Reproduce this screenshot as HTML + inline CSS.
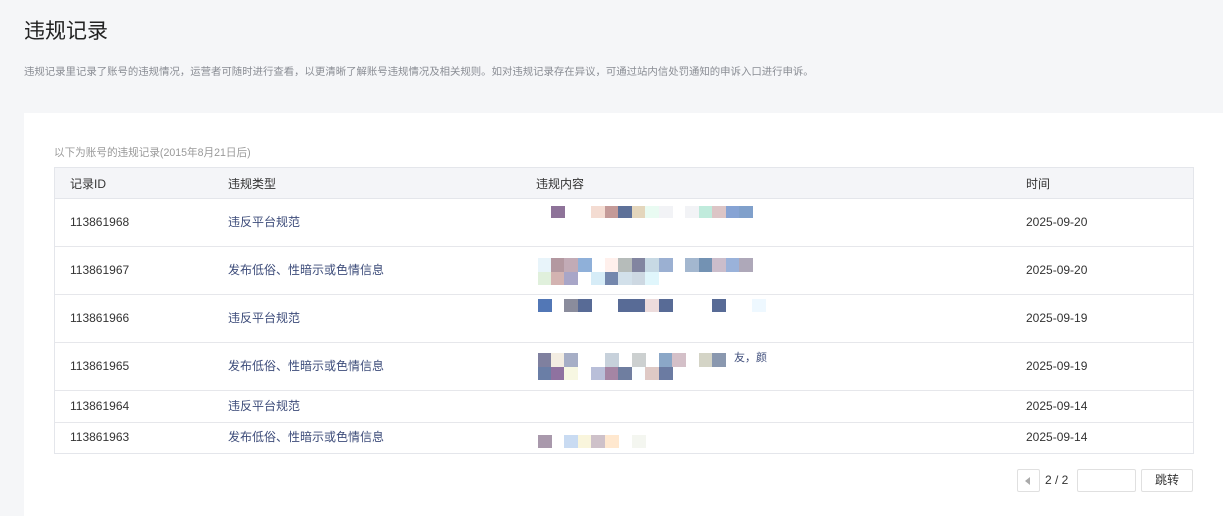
<!DOCTYPE html>
<html><head><meta charset="utf-8"><style>
*{margin:0;padding:0;box-sizing:border-box}
body{width:1223px;height:516px;overflow:hidden;background:#f5f6f8;font-family:"Liberation Sans","Noto Sans CJK SC",sans-serif;position:relative;color:#333}
.a{position:absolute;white-space:nowrap}
.card{position:absolute;left:24px;top:113px;width:1199px;height:403px;background:#fff}
.tbl{position:absolute;left:54px;top:167px;width:1140px;height:287px;border:1px solid #e4e6eb}
.hd{position:absolute;left:0;top:0;width:1138px;height:31px;background:#f4f5f8;border-bottom:1px solid #e4e6eb}
.ln{position:absolute;left:0;width:1138px;height:1px;background:#e6e7eb}
.t{font-size:12px;color:#333;line-height:14px;height:14px}
.ty{color:#3d4c7a}
.b{position:absolute;width:14px}
</style></head><body>
<div class="a" style="left:24px;top:17px;font-size:21px;color:#222;line-height:30px">违规记录</div>
<div class="a" style="left:24px;top:66px;font-size:10.4px;line-height:14px;color:#8a8d94">违规记录里记录了账号的违规情况，运营者可随时进行查看，以更清晰了解账号违规情况及相关规则。如对违规记录存在异议，可通过站内信处罚通知的申诉入口进行申诉。</div>
<div class="card"></div>
<div class="a" style="left:54px;top:146px;font-size:10.6px;line-height:14px;color:#999">以下为账号的违规记录(2015年8月21日后)</div>
<div class="tbl"><div class="hd"></div>
<div class="ln" style="top:78px"></div><div class="ln" style="top:126px"></div><div class="ln" style="top:174px"></div><div class="ln" style="top:222px"></div><div class="ln" style="top:254px"></div>
</div>
<div class="a t" style="left:70px;top:177px">记录ID</div>
<div class="a t" style="left:228px;top:177px">违规类型</div>
<div class="a t" style="left:536px;top:177px">违规内容</div>
<div class="a t" style="left:1026px;top:177px">时间</div>

<div class="a t" style="left:70px;top:215px">113861968</div><div class="a t ty" style="left:228px;top:215px">违反平台规范</div><div class="a t" style="left:1026px;top:215px">2025-09-20</div>
<div class="a t" style="left:70px;top:263px">113861967</div><div class="a t ty" style="left:228px;top:263px">发布低俗、性暗示或色情信息</div><div class="a t" style="left:1026px;top:263px">2025-09-20</div>
<div class="a t" style="left:70px;top:311px">113861966</div><div class="a t ty" style="left:228px;top:311px">违反平台规范</div><div class="a t" style="left:1026px;top:311px">2025-09-19</div>
<div class="a t" style="left:70px;top:359px">113861965</div><div class="a t ty" style="left:228px;top:359px">发布低俗、性暗示或色情信息</div><div class="a t" style="left:1026px;top:359px">2025-09-19</div>
<div class="a t" style="left:70px;top:399px">113861964</div><div class="a t ty" style="left:228px;top:399px">违反平台规范</div><div class="a t" style="left:1026px;top:399px">2025-09-14</div>
<div class="a t" style="left:70px;top:430px">113861963</div><div class="a t ty" style="left:228px;top:430px">发布低俗、性暗示或色情信息</div><div class="a t" style="left:1026px;top:430px">2025-09-14</div>

<div style="position:absolute;top:206px;height:12px;left:0">
<div class="b" style="left:551px;height:12px;background:#8e7399"></div>
<div class="b" style="left:591px;height:12px;background:#f4dcd2"></div>
<div class="b" style="left:605px;height:12px;background:#c49a98"></div>
<div class="b" style="left:618px;height:12px;background:#5e7199"></div>
<div class="b" style="left:632px;height:12px;background:#e4d6bc"></div>
<div class="b" style="left:645px;height:12px;background:#e9fbf2"></div>
<div class="b" style="left:659px;height:12px;background:#f2f3f6"></div>
<div class="b" style="left:685px;height:12px;background:#f2f3f6"></div>
<div class="b" style="left:699px;height:12px;background:#c0ebdc"></div>
<div class="b" style="left:712px;height:12px;background:#dcc5c6"></div>
<div class="b" style="left:726px;height:12px;background:#86a3d4"></div>
<div class="b" style="left:739px;height:12px;background:#80a0cb"></div>
</div>
<div style="position:absolute;top:258px;left:0">
<div class="b" style="left:538px;height:14px;background:#e8f4fa"></div>
<div class="b" style="left:551px;height:14px;background:#b398a0"></div>
<div class="b" style="left:564px;height:14px;background:#c2abb6"></div>
<div class="b" style="left:578px;height:14px;background:#8fb0d9"></div>
<div class="b" style="left:605px;height:14px;background:#fff0ec"></div>
<div class="b" style="left:618px;height:14px;background:#b6bcba"></div>
<div class="b" style="left:632px;height:14px;background:#8285a0"></div>
<div class="b" style="left:645px;height:14px;background:#c7d9e4"></div>
<div class="b" style="left:659px;height:14px;background:#9bb0d2"></div>
<div class="b" style="left:685px;height:14px;background:#a3b7cf"></div>
<div class="b" style="left:699px;height:14px;background:#7392b3"></div>
<div class="b" style="left:712px;height:14px;background:#cbbdcb"></div>
<div class="b" style="left:726px;height:14px;background:#9ab2da"></div>
<div class="b" style="left:739px;height:14px;background:#aea8b9"></div>
</div>
<div style="position:absolute;top:272px;left:0">
<div class="b" style="left:538px;height:13px;background:#e0f0dc"></div>
<div class="b" style="left:551px;height:13px;background:#d3b3b1"></div>
<div class="b" style="left:564px;height:13px;background:#a8a6c8"></div>
<div class="b" style="left:591px;height:13px;background:#d6ecf7"></div>
<div class="b" style="left:605px;height:13px;background:#7487ad"></div>
<div class="b" style="left:618px;height:13px;background:#d2e0ea"></div>
<div class="b" style="left:632px;height:13px;background:#cdd8e2"></div>
<div class="b" style="left:645px;height:13px;background:#e0f6fc"></div>
</div>
<div style="position:absolute;top:299px;left:0">
<div class="b" style="left:538px;height:13px;background:#5277b6"></div>
<div class="b" style="left:564px;height:13px;background:#8a8c9c"></div>
<div class="b" style="left:578px;height:13px;background:#586b96"></div>
<div class="b" style="left:618px;height:13px;width:27px;background:#586b96"></div>
<div class="b" style="left:645px;height:13px;background:#eddcdc"></div>
<div class="b" style="left:659px;height:13px;background:#586b96"></div>
<div class="b" style="left:712px;height:13px;background:#586b96"></div>
<div class="b" style="left:752px;height:13px;background:#eef8ff"></div>
</div>
<div style="position:absolute;top:353px;left:0">
<div class="b" style="left:538px;height:14px;background:#7f809f"></div>
<div class="b" style="left:551px;height:14px;background:#f3ede2"></div>
<div class="b" style="left:564px;height:14px;background:#a6aec6"></div>
<div class="b" style="left:605px;height:14px;background:#c7d1db"></div>
<div class="b" style="left:632px;height:14px;background:#ccd0d0"></div>
<div class="b" style="left:659px;height:14px;background:#8ba7c7"></div>
<div class="b" style="left:672px;height:14px;background:#d4c0c8"></div>
<div class="b" style="left:699px;height:14px;background:#d4d4c6"></div>
<div class="b" style="left:712px;height:14px;background:#8a98af"></div>
</div>
<div class="a" style="left:734px;top:351px;font-size:11px;line-height:14px;color:#3d4c7a">友，颜</div>
<div style="position:absolute;top:367px;left:0">
<div class="b" style="left:538px;height:13px;background:#6a7ea6"></div>
<div class="b" style="left:551px;height:13px;background:#8f72a0"></div>
<div class="b" style="left:564px;height:13px;background:#f7f7e2"></div>
<div class="b" style="left:591px;height:13px;background:#b9bfd9"></div>
<div class="b" style="left:605px;height:13px;background:#a585a4"></div>
<div class="b" style="left:618px;height:13px;background:#6f7ea0"></div>
<div class="b" style="left:632px;height:13px;background:#fafeff"></div>
<div class="b" style="left:645px;height:13px;background:#dec9c5"></div>
<div class="b" style="left:659px;height:13px;background:#6b7ba2"></div>
</div>
<div style="position:absolute;top:435px;left:0">
<div class="b" style="left:538px;height:13px;background:#a999ac"></div>
<div class="b" style="left:564px;height:13px;background:#c9dbf2"></div>
<div class="b" style="left:578px;height:13px;background:#f9f5dc"></div>
<div class="b" style="left:591px;height:13px;background:#cec1c9"></div>
<div class="b" style="left:605px;height:13px;background:#ffe8cf"></div>
<div class="b" style="left:632px;height:13px;background:#f4f6f0"></div>
</div>

<div class="a" style="left:1017px;top:469px;width:23px;height:23px;border:1px solid #e0e0e0;border-radius:2px"></div>
<div class="a" style="left:1025px;top:477px;width:0;height:0;border-top:4px solid transparent;border-bottom:4px solid transparent;border-right:5px solid #aaa"></div>
<div class="a" style="left:1045px;top:473px;font-size:12px;line-height:14px;color:#333">2 / 2</div>
<div class="a" style="left:1077px;top:469px;width:59px;height:23px;border:1px solid #e0e0e0;border-radius:2px"></div>
<div class="a" style="left:1141px;top:469px;width:52px;height:23px;border:1px solid #e0e0e0;border-radius:2px;font-size:12px;text-align:center;line-height:21px;color:#333">跳转</div>
</body></html>
